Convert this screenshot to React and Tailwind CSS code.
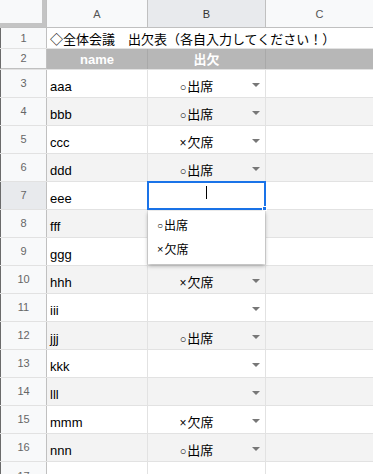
import React from "react";

const FONT = { fontFamily: '"Liberation Sans", Arial, "Noto Sans CJK JP", sans-serif' };

const data = [
  { n: 3, a: "aaa", b: "o" },
  { n: 4, a: "bbb", b: "o" },
  { n: 5, a: "ccc", b: "x" },
  { n: 6, a: "ddd", b: "o" },
  { n: 7, a: "eee", b: "active" },
  { n: 8, a: "fff", b: "hidden" },
  { n: 9, a: "ggg", b: "hidden" },
  { n: 10, a: "hhh", b: "x" },
  { n: 11, a: "iii", b: "" },
  { n: 12, a: "jjj", b: "o" },
  { n: 13, a: "kkk", b: "" },
  { n: 14, a: "lll", b: "" },
  { n: 15, a: "mmm", b: "x" },
  { n: 16, a: "nnn", b: "o" },
];

function Arrow() {
  return (
    <svg width="8" height="4" viewBox="0 0 8 4" className="shrink-0">
      <path d="M0 0 L8 0 L4 4 Z" fill="#777" />
    </svg>
  );
}

function Val({ v }) {
  if (v === "o")
    return (
      <span className="flex items-end">
        <span className="text-[11px] leading-none mb-[2px] mr-[1px]">○</span>
        <span>出席</span>
      </span>
    );
  if (v === "x")
    return (
      <span className="flex items-end">
        <span className="text-[12px] leading-none mb-[2px] mr-[1px]">×</span>
        <span>欠席</span>
      </span>
    );
  return null;
}

export default function App() {
  return (
    <div className="relative w-[373px] h-[474px] overflow-hidden bg-white text-[13px] text-black" style={FONT}>
      {/* column header row */}
      <div className="flex h-[28px] border-b border-[#c0c0c0] bg-[#f8f9fa] text-[11px] text-[#555]">
        <div className="w-[47px] shrink-0 border-r border-[#c0c0c0]">
          <div className="h-full w-full border-r-4 border-b-4 border-[#c4c4c4] bg-[#f8f9fa]" />
        </div>
        <div className="w-[101px] shrink-0 border-r border-[#c0c0c0] flex items-center justify-center pt-[2px]">A</div>
        <div className="w-[118px] shrink-0 border-r border-[#c0c0c0] bg-[#e8eaed] flex items-center justify-center pt-[2px] text-[#333]">B</div>
        <div className="flex-1 flex items-center justify-center pt-[2px]">C</div>
      </div>

      {/* row 1 */}
      <div className="flex h-[21px] border-b border-[#e2e2e2]">
        <div className="w-[47px] shrink-0 border-r border-[#c0c0c0] bg-[#f8f9fa] border-l border-l-[#6b6b6b] flex items-center justify-center text-[11px] text-[#666]">1</div>
        <div className="flex-1 flex items-center pl-[3px] leading-none whitespace-nowrap" style={{ fontFamily: '"Noto Sans CJK JP", sans-serif' }}>
          ◇全体会議　出欠表（各自入力してください！）
        </div>
      </div>

      {/* row 2 */}
      <div className="flex h-[21px] border-b border-[#e2e2e2]">
        <div className="w-[47px] shrink-0 border-r border-[#c0c0c0] border-b border-b-[#c0c0c0] bg-[#f8f9fa] border-l border-l-[#6b6b6b] flex items-center justify-center text-[11px] text-[#666]">2</div>
        <div className="w-[101px] shrink-0 border-r border-[#a9a9a9] bg-[#b7b7b7] flex items-center justify-center text-white font-bold leading-none">name</div>
        <div className="w-[118px] shrink-0 border-r border-[#a9a9a9] bg-[#b7b7b7] flex items-center justify-center text-white font-bold leading-none">出欠</div>
        <div className="flex-1 bg-[#b7b7b7]" />
      </div>

      {/* data rows */}
      {data.map((r) => {
        const band = r.n % 2 === 0 ? "bg-[#f3f3f3]" : "bg-white";
        const showArrow = r.b !== "active" && r.b !== "hidden";
        return (
          <div key={r.n} className={`flex h-[28px] border-b border-[#e2e2e2] ${band}`}>
            <div
              className={`w-[47px] shrink-0 border-r border-[#c0c0c0] border-l border-l-[#6b6b6b] flex items-center justify-center text-[11px] text-[#666] ${
                r.n === 7 ? "bg-[#e8eaed]" : "bg-[#f8f9fa]"
              }`}
            >
              {r.n}
            </div>
            <div className="w-[101px] shrink-0 border-r border-[#e2e2e2] flex items-end pl-[3px] pb-[2px] leading-[16px]">{r.a}</div>
            <div className="w-[118px] shrink-0 border-r border-[#e2e2e2] flex items-end pb-[2px] leading-[16px] relative">
              <div className="flex-1 flex justify-center pr-[20px]">
                <Val v={r.b} />
              </div>
              {showArrow && (
                <div className="w-[22px] h-full flex items-center justify-end pr-[5px] pt-[3px] absolute right-0 top-0">
                  <Arrow />
                </div>
              )}
            </div>
            <div className="flex-1" />
          </div>
        );
      })}

      {/* row 17 */}
      <div className="flex h-[30px] bg-white">
        <div className="w-[47px] shrink-0 border-r border-[#c0c0c0] bg-[#f8f9fa] border-l border-l-[#6b6b6b] flex items-start justify-center pt-[6px] text-[11px] text-[#666]">17</div>
        <div className="w-[101px] shrink-0 border-r border-[#e2e2e2]" />
        <div className="w-[118px] shrink-0 border-r border-[#e2e2e2]" />
        <div className="flex-1" />
      </div>

      {/* active cell editor */}
      <div className="absolute left-[147px] top-[181px] w-[119px] h-[29px] border-2 border-[#1a73e8] bg-white">
        <div className="absolute left-[57px] top-[3px] w-px h-[13px] bg-black" />
        <div className="absolute -right-[3px] -bottom-[3px] w-[5px] h-[5px] bg-[#1a73e8] border border-white" />
      </div>

      {/* dropdown popup */}
      <div className="absolute left-[148px] top-[211px] w-[117px] h-[53px] bg-white shadow-[0_2px_4px_rgba(0,0,0,0.3)] flex flex-col justify-center text-[12px]">
        <div className="h-[24px] flex items-center pl-[9px]">
          <span className="text-[10px] mr-[1px]">○</span>出席
        </div>
        <div className="h-[24px] flex items-center pl-[9px]">
          <span className="text-[11px] mr-[1px]">×</span>欠席
        </div>
      </div>
    </div>
  );
}
